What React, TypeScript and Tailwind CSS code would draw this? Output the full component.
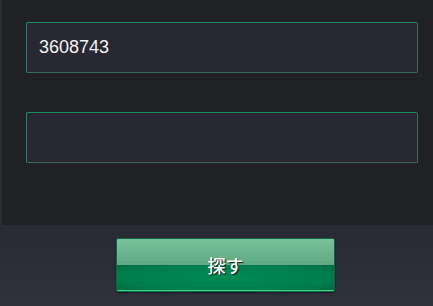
import React from 'react';

const fieldClass =
  'h-[51px] w-full rounded-[2px] border border-[#1f8a62] border-b-[#3a6a5a] border-r-[#3a6a5a] bg-[#282832] px-3 text-[18px] text-[#f2f2f2] outline-none';

const App: React.FC = () => {
  return (
    <div
      className="flex h-[306px] w-[433px] flex-col overflow-hidden bg-[#2c2c37]"
      style={{ fontFamily: '"Liberation Sans", "Noto Sans CJK JP", sans-serif' }}
    >
      {/* Form panel */}
      <div className="ml-[2px] flex h-[225px] flex-col gap-[39px] bg-[#202125] pl-[24px] pr-[15px] pt-[22px]">
        <input className={fieldClass} defaultValue="3608743" />
        <input className={fieldClass} defaultValue="" />
      </div>

      {/* Button area */}
      <div className="flex flex-1 bg-gradient-to-b from-[#2a2a34] to-[#31313c] pl-[116px] pt-[13px]">
        <button className="relative flex h-[54px] w-[219px] flex-col overflow-hidden rounded-[2px] border border-[#0b6a45] shadow-[0_1px_2px_rgba(0,0,0,0.5)]">
          <div className="h-[26px] w-full bg-gradient-to-b from-[#78c39a] to-[#5ea883]" />
          <div className="w-full flex-1 border-b border-[#3ad98a] bg-[radial-gradient(ellipse_at_center,#008a55_0%,#007d4d_70%,#006a40_100%)]" />
          <span
            className="absolute inset-0 flex items-center justify-center text-[18px] font-medium text-white [text-shadow:1px_1px_1px_rgba(0,0,0,0.8)]"
            style={{ fontFamily: '"Noto Sans CJK JP", sans-serif' }}
          >
            探す
          </span>
        </button>
      </div>
    </div>
  );
};

export default App;
